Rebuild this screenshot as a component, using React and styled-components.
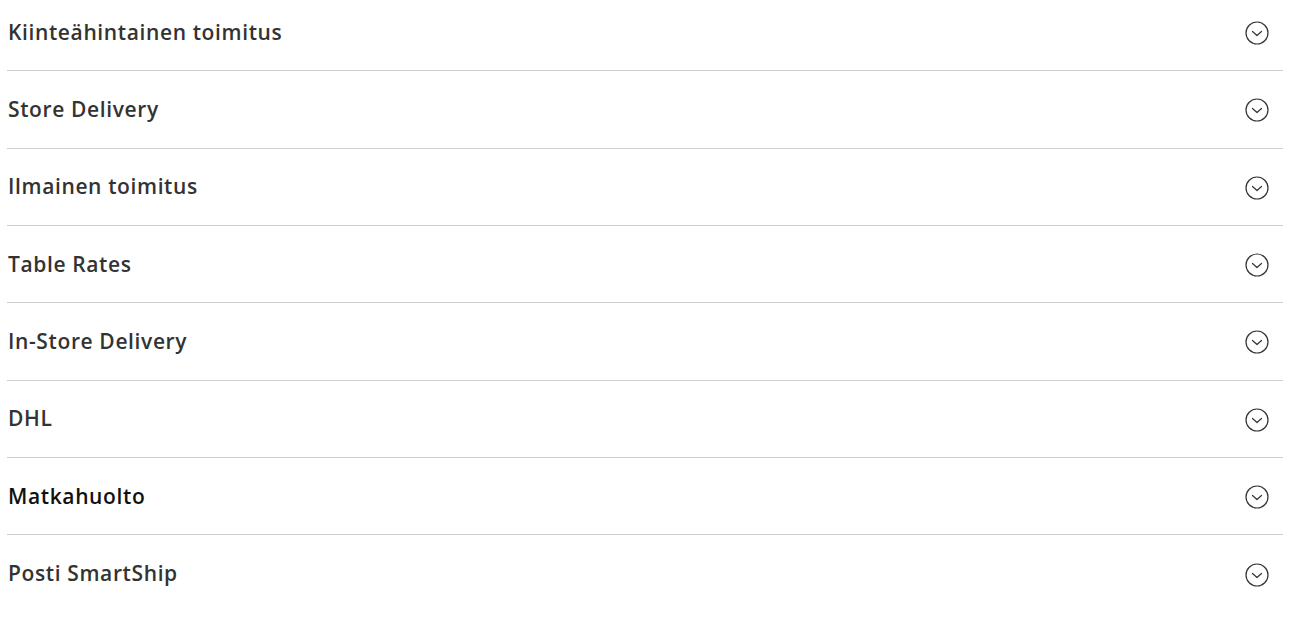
import React from "react";
import styled, { createGlobalStyle } from "styled-components";

const Global = createGlobalStyle`
  html, body { margin: 0; padding: 0; background: #fff; }
  body { font-family: "Open Sans", "Liberation Sans", sans-serif; }
`;

const List = styled.div`
  margin: -6px 30px 0 7px;
  display: flex;
  flex-direction: column;
`;

const Row = styled.div`
  display: flex;
  align-items: center;
  justify-content: space-between;
  height: 77.33px;
  box-sizing: border-box;
  border-bottom: ${(p) => (p.$last ? "none" : "1px solid #cfcfcf")};
  padding: 0 14px 1px 1px;
  cursor: pointer;
`;

const Title = styled.span`
  font-size: 21px;
  font-weight: 600;
  color: ${(p) => (p.$dark ? "#111" : "#333")};
  letter-spacing: 0.62px;
`;

const IconWrap = styled.span`
  display: flex;
  margin-top: 3px;
`;

const Icon = () => (
  <IconWrap>
    <svg width="24" height="24" viewBox="0 0 24 24" fill="none">
      <circle cx="12" cy="12" r="11" stroke="#333" strokeWidth="1.2" />
      <path d="M7.5 10.5 L12 14.5 L16.5 10.5" stroke="#333" strokeWidth="1.2" strokeLinecap="round" strokeLinejoin="round" />
    </svg>
  </IconWrap>
);

const items = [
  "Kiinteähintainen toimitus",
  "Store Delivery",
  "Ilmainen toimitus",
  "Table Rates",
  "In-Store Delivery",
  "DHL",
  "Matkahuolto",
  "Posti SmartShip",
];

export default function App() {
  return (
    <>
      <Global />
      <List>
        {items.map((t, i) => (
          <Row key={t} $last={i === items.length - 1}>
            <Title $dark={t === "Matkahuolto"}>{t}</Title>
            <Icon />
          </Row>
        ))}
      </List>
    </>
  );
}
